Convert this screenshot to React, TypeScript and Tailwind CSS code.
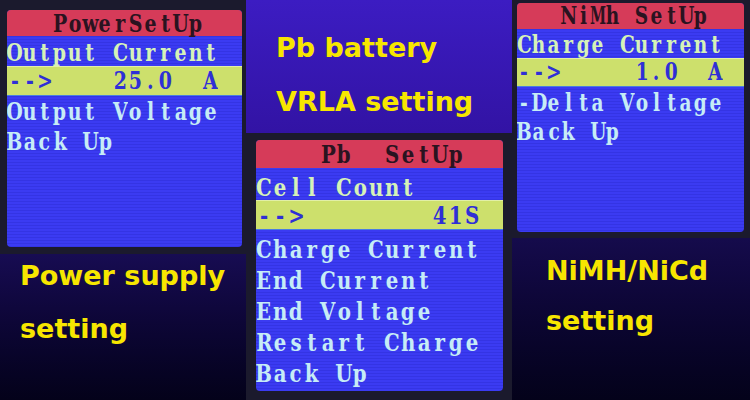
import React from "react";

type Row = { t: string; hi?: boolean; first?: boolean };

const screenBg =
  "bg-[repeating-linear-gradient(180deg,#3b3bf2_0px,#3b3bf2_2px,#3434e4_2px,#3434e4_3px)]";

function Cells({ text, cellCls }: { text: string; cellCls: string }) {
  return (
    <div className="flex">
      {Array.from(text).map((c, i) => (
        <span key={i} className={`flex justify-center shrink-0 ${cellCls}`}>
          {c === " " ? (
            "\u00a0"
          ) : (
            <span className={`inline-block ${c === "M" || c === "m" ? "scale-x-[0.62]" : "scale-x-[0.79]"}`}>{c}</span>
          )}
        </span>
      ))}
    </div>
  );
}

function Screen({
  title,
  rows,
  wrapCls,
  screenCls,
  headerCls,
  textCls,
  rowCls,
  hiCls,
  firstCls,
  cellCls,
}: {
  title: string;
  rows: Row[];
  wrapCls: string;
  screenCls: string;
  headerCls: string;
  textCls: string;
  rowCls: string;
  hiCls: string;
  firstCls: string;
  cellCls: string;
}) {
  return (
    <div className={`bg-[#1b1a2d] ${wrapCls}`}>
      <div
        className={`${screenBg} rounded-[4px] overflow-hidden flex flex-col font-['DejaVu_Serif',serif] font-bold leading-none ${screenCls} ${textCls}`}
      >
        <div className={`bg-[#d63b59] text-[#2a1320] flex items-center ${headerCls}`}>
          <Cells text={title} cellCls={cellCls} />
        </div>
        {rows.map((r, i) => (
          <div
            key={i}
            className={`flex items-center ${r.first ? firstCls : r.hi ? hiCls : rowCls} ${
              r.hi
                ? "bg-[#cde06c] text-[#2f2fd6] border-t border-t-[#e2efa6] border-b border-b-[#4a7ee0]"
                : r.first
                ? "text-[#d6f2b8]"
                : "text-[#c6ecf6]"
            }`}
          >
            <Cells text={r.t} cellCls={cellCls} />
          </div>
        ))}
      </div>
    </div>
  );
}

const label =
  "font-['DejaVu_Sans',sans-serif] font-bold text-[27px] leading-[30px] text-[#f7e600] whitespace-pre";

export default function App() {
  return (
    <div className="w-[750px] h-[400px] flex overflow-hidden bg-[#0a0628]">
      {/* Left column */}
      <div className="w-[246px] flex flex-col">
        <Screen
          title="   PowerSetUp"
          rows={[
            { t: "Output Current", first: true },
            { t: "-->    25.0  A", hi: true },
            { t: "Output Voltage" },
            { t: "Back Up" },
          ]}
          wrapCls="h-[254px] pl-[7px] pt-[10px] pr-[4px] pb-[7px]"
          screenCls="h-[237px]"
          headerCls="h-[26px] pt-[1px]"
          textCls="text-[24px]"
          cellCls="w-[15.1px]"
          firstCls="h-[30px] pt-[3px]"
          hiCls="h-[30px] pt-[0px]"
          rowCls="h-[30px] pt-[1px]"
        />
        <div className="flex-1 bg-gradient-to-b from-[#170c52] to-[#04021a] pl-[20px] pt-[7px]">
          <div className={label}>Power supply</div>
          <div className={`${label} mt-[23px]`}>setting</div>
        </div>
      </div>

      {/* Center column */}
      <div className="w-[266px] flex flex-col">
        <div className="h-[133px] bg-gradient-to-b from-[#3c1cc2] to-[#3213a4] pl-[30px] pt-[33px]">
          <div className={label}>Pb battery</div>
          <div className={`${label} mt-[24px]`}>VRLA setting</div>
        </div>
        <Screen
          title="    Pb  SetUp"
          rows={[
            { t: "Cell Count", first: true },
            { t: "-->        41S", hi: true },
            { t: "Charge Current" },
            { t: "End Current" },
            { t: "End Voltage" },
            { t: "Restart Charge" },
            { t: "Back Up" },
          ]}
          wrapCls="flex-1 pl-[10px] pt-[7px] pr-[9px]"
          screenCls="h-[251px]"
          headerCls="h-[28px] pt-[1px]"
          textCls="text-[25px]"
          cellCls="w-[16px]"
          firstCls="h-[32px] pt-[6px]"
          hiCls="h-[30px] pt-[0px]"
          rowCls="h-[31px] pt-[7px]"
        />
      </div>

      {/* Right column */}
      <div className="w-[238px] flex flex-col">
        <Screen
          title="   NiMh SetUp"
          rows={[
            { t: "Charge Current", first: true },
            { t: "-->     1.0  A", hi: true },
            { t: "-Delta Voltage" },
            { t: "Back Up" },
          ]}
          wrapCls="h-[238px] pl-[5px] pt-[3px] pr-[6px] pb-[6px]"
          screenCls="h-[229px]"
          headerCls="h-[26px] pt-[1px]"
          textCls="text-[23.5px]"
          cellCls="w-[14.7px]"
          firstCls="h-[29px] pt-[4px]"
          hiCls="h-[29px] pt-[1px]"
          rowCls="h-[29px] pt-[4px]"
        />
        <div className="flex-1 bg-gradient-to-b from-[#150b4c] to-[#04021a] pl-[34px] pt-[18px]">
          <div className={label}>NiMH/NiCd</div>
          <div className={`${label} mt-[20px]`}>setting</div>
        </div>
      </div>
    </div>
  );
}
